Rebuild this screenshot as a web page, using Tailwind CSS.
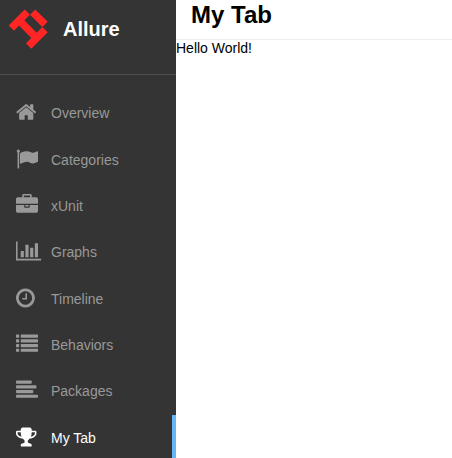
<!DOCTYPE html>
<html lang="en">
<head>
<meta charset="utf-8">
<title>Allure</title>
<script src="https://cdn.jsdelivr.net/npm/@tailwindcss/browser@4"></script>
</head>
<body class="flex h-screen overflow-hidden bg-white font-['Liberation_Sans',Arial,sans-serif] text-sm text-black">
<aside class="h-full w-44 shrink-0 overflow-hidden bg-[#343434]">
  <div class="flex h-[75px] border-b border-[#4f4f4f]">
    <svg class="ml-2 mt-2 size-[42px] shrink-0" viewBox="8 8 42 42" fill="#ff2525"><path d="M8.7 25.4 24.7 9.4 30 14.7 24.3 20.3 36.7 32.7 42.3 27 47.7 32.3 31.3 48.7 26 43.3 31.3 38 19 25.6 14 30.7Z"/><path d="M30 14.7 35.3 9.4 47.7 21.7 42.3 27Z"/></svg>
    <span class="ml-[13px] mt-[14px] text-xl leading-[30px] font-bold text-white">Allure</span>
  </div>
  <nav class="flex flex-col pt-[15px] text-[#999]">
    <a class="flex h-[47px] shrink-0 items-start pt-[11px] pl-4"><svg class="mr-[13px] h-[22px] w-[22px] overflow-visible" viewBox="64 0 1792 1792" fill="currentColor"><path d="M1472 992v480q0 26-19 45t-45 19h-384v-384h-256v384h-384q-26 0-45-19t-19-45v-480q0-1 .5-3t.5-3l575-474 575 474q1 2 1 6zm223-69l-62 74q-8 9-21 11h-3q-13 0-21-7l-692-577-692 577q-12 8-24 7-13-2-21-11l-62-74q-8-10-7-23.5t11-21.5l719-599q32-26 76-26t76 26l244 204v-195q0-14 9-23t23-9h192q14 0 23 9t9 23v408l219 182q10 8 11 21.5t-7 23.5z"/></svg><span class="mt-0.5">Overview</span></a>
    <a class="flex h-[46px] shrink-0 items-start pt-[11px] pl-4"><svg class="mr-[13px] h-[22px] w-[22px] overflow-visible" viewBox="0 0 1792 1792" fill="currentColor"><path d="M320 256q0 72-64 110v1266q0 13-9.500 22.500t-22.500 9.500h-64q-13 0-22.500-9.500t-9.500-22.500v-1266q-64-38-64-110 0-53 37.500-90.500t90.500-37.500 90.500 37.500 37.500 90.500zm1472 64v763q0 25-12.500 38.500t-39.500 27.500q-215 116-369 116-61 0-123.500-22t-108.500-48-115.500-48-142.500-22q-192 0-464 146-17 9-33 9-26 0-45-19t-19-45v-742q0-32 31-55 21-14 79-43 236-120 421-120 107 0 200 29t219 88q38 19 88 19 54 0 117.500-21t110-47 88-47 54.500-21q26 0 45 19t19 45z"/></svg><span class="mt-0.5">Categories</span></a>
    <a class="flex h-[46px] shrink-0 items-start pt-[11px] pl-4"><svg class="mr-[13px] h-[22px] w-[22px] overflow-visible" viewBox="0 0 1792 1792" fill="currentColor"><path d="M640 256h512v-128h-512v128zm1152 640v480q0 66-47 113t-113 47h-1472q-66 0-113-47t-47-113v-480h672v160q0 26 19 45t45 19h320q26 0 45-19t19-45v-160h672zm-768 0v128h-256v-128h256zm768-480v384h-1792v-384q0-66 47-113t113-47h352v-160q0-40 28-68t68-28h576q40 0 68 28t28 68v160h352q66 0 113 47t47 113z"/></svg><span class="mt-0.5">xUnit</span></a>
    <a class="flex h-[47px] shrink-0 items-start pt-[11px] pl-4"><svg class="mr-[13px] h-[22px] w-[22px] overflow-visible" viewBox="0 0 1792 1792" fill="currentColor"><path d="M640 896v512h-256v-512h256zm384-512v1024h-256v-1024h256zm1024 1152v128h-2048v-1536h128v1408h1920zm-640-896v768h-256v-768h256zm384-384v1152h-256v-1152h256z"/></svg><span class="mt-0.5">Graphs</span></a>
    <a class="flex h-[46px] shrink-0 items-start pt-[11px] pl-4"><svg class="mr-[13px] h-[22px] w-[22px] overflow-visible" viewBox="128 0 1792 1792" fill="currentColor"><path d="M1024 544v448q0 14-9 23t-23 9h-320q-14 0-23-9t-9-23v-64q0-14 9-23t23-9h224v-352q0-14 9-23t23-9h64q14 0 23 9t9 23zm416 352q0-148-73-273t-198-198-273-73-273 73-198 198-73 273 73 273 198 198 273 73 273-73 198-198 73-273zm224 0q0 209-103 385.500t-279.500 279.500-385.500 103-385.500-103-279.500-279.500-103-385.500 103-385.500 279.500-279.500 385.500-103 385.500 103 279.500 279.500 103 385.500z"/></svg><span class="mt-0.5">Timeline</span></a>
    <a class="flex h-[46px] shrink-0 items-start pt-[11px] pl-4"><svg class="mr-[13px] h-[22px] w-[22px] overflow-visible" viewBox="0 0 1792 1792" fill="currentColor"><rect y="128" width="256" height="256" rx="32"/><rect x="384" y="128" width="1408" height="256" rx="32"/><rect y="512" width="256" height="256" rx="32"/><rect x="384" y="512" width="1408" height="256" rx="32"/><rect y="896" width="256" height="256" rx="32"/><rect x="384" y="896" width="1408" height="256" rx="32"/><rect y="1280" width="256" height="256" rx="32"/><rect x="384" y="1280" width="1408" height="256" rx="32"/></svg><span class="mt-0.5">Behaviors</span></a>
    <a class="flex h-[47px] shrink-0 items-start pt-[11px] pl-4"><svg class="mr-[13px] h-[22px] w-[22px] overflow-visible" viewBox="0 0 1792 1792" fill="currentColor"><rect y="128" width="1280" height="256" rx="64"/><rect y="512" width="1664" height="256" rx="64"/><rect y="896" width="1408" height="256" rx="64"/><rect y="1280" width="1792" height="256" rx="64"/></svg><span class="mt-0.5">Packages</span></a>
    <a class="flex h-[46px] shrink-0 items-start border-r-4 border-[#64b5f6] pt-[11px] pl-4 text-white"><svg class="mr-[13px] h-[22px] w-[22px] overflow-visible" viewBox="64 0 1792 1792" fill="currentColor"><path d="M522 883q-74-162-74-371h-256v96q0 78 94.500 162t235.500 113zm1078-275v-96h-256q0 209-74 371 141-29 235.500-113t94.500-162zm128-128v128q0 71-41.500 143t-112 130-173 97.500-215.500 44.500q-42 54-95 95-38 34-52.500 72.500t-14.500 89.500q0 54 30.500 91t97.500 37q75 0 133.500 45.500t58.500 114.500v64q0 14-9 23t-23 9h-832q-14 0-23-9t-9-23v-64q0-69 58.500-114.500t133.500-45.500q67 0 97.500-37t30.500-91q0-51-14.500-89.500t-52.500-72.500q-53-41-95-95-113-5-215.500-44.500t-173-97.500-112-130-41.500-143v-128q0-40 28-68t68-28h288v-96q0-66 47-113t113-47h576q66 0 113 47t47 113v96h288q40 0 68 28t28 68z"/></svg><span class="mt-0.5">My Tab</span></a>
  </nav>
</aside>
<main class="min-w-0 flex-1">
  <h1 class="h-10 border-b border-[#eceff1] pl-[15px] text-2xl leading-[29px] font-bold">My Tab</h1>
  <p class="leading-4">Hello World!</p>
</main>
</body>
</html>
